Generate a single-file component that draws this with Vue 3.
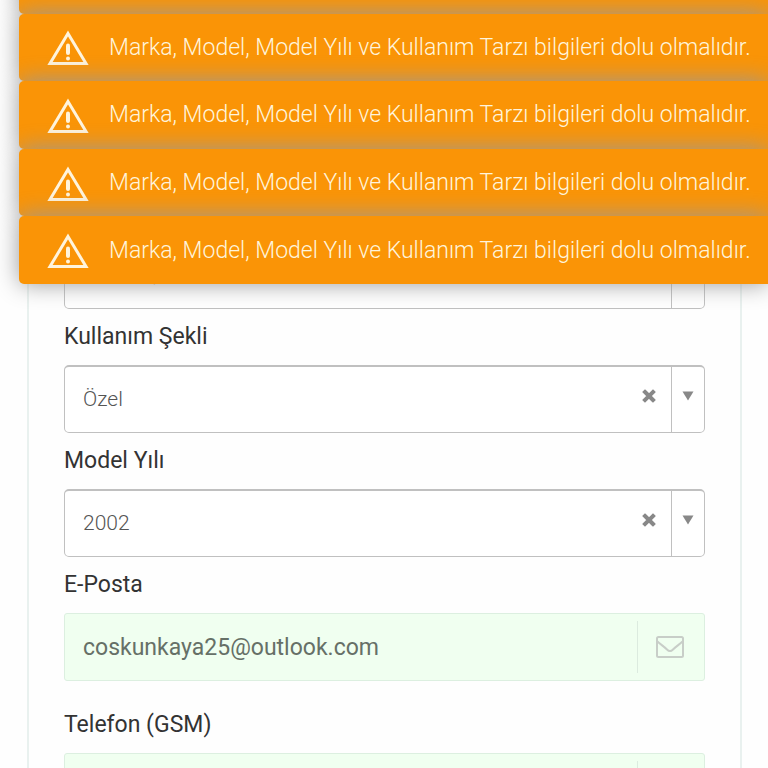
<template>
  <div class="page">
    <form class="panel" @submit.prevent>
      <div v-for="field in selects" :key="field.id" class="form-group">
        <label :for="field.id">{{ field.label }}</label>
        <div class="select-box">
          <select :id="field.id" v-model="field.value">
            <option v-for="option in field.options" :key="option" :value="option">{{ option }}</option>
          </select>
          <button type="button" class="clear" :aria-label="field.label + ' temizle'" @click="field.value = ''">
            <svg viewBox="0 0 14 14" width="14" height="14">
              <path d="M3 3L11 11M11 3L3 11" stroke="currentColor" stroke-width="4" stroke-linecap="square" />
            </svg>
          </button>
          <span class="arrow">
            <svg viewBox="0 0 12 10" width="12" height="10">
              <path d="M0.5 0.5H11.5L6 9.5Z" fill="currentColor" />
            </svg>
          </span>
        </div>
      </div>

      <div class="form-group spaced">
        <label for="email">E-Posta</label>
        <div class="input-box">
          <input id="email" v-model="email" type="email" />
          <span class="addon">
            <svg viewBox="0 0 28 22" width="28" height="22" fill="none" stroke="currentColor" stroke-width="2">
              <rect x="1" y="1" width="26" height="20" rx="1.5" />
              <path d="M1.5 5.5C4 8 8 10.5 11 13.5Q14 16.5 17 13.5C20 10.5 24 8 26.5 5.5" />
            </svg>
          </span>
        </div>
      </div>

      <div class="form-group spaced">
        <label for="phone">Telefon (GSM)</label>
        <div class="input-box">
          <input id="phone" v-model="phone" type="tel" />
          <span class="addon"></span>
        </div>
      </div>
    </form>

    <div class="toasts">
      <div v-for="n in 5" :key="n" class="toast" role="alert">
        <svg class="warning" viewBox="0 0 42 36" width="42" height="36" fill="none" stroke="currentColor">
          <path d="M21 3.5L39 33.5H3Z" stroke-width="3" />
          <path d="M21 15.5V23" stroke-width="4" stroke-linecap="round" />
          <path d="M21 28.5V28.6" stroke-width="4" stroke-linecap="round" />
        </svg>
        <span>{{ message }}</span>
      </div>
    </div>
  </div>
</template>

<script setup>
import { ref } from 'vue'

const message = 'Marka, Model, Model Yılı ve Kullanım Tarzı bilgileri dolu olmalıdır.'

const selects = ref([
  { id: 'brand', label: 'Marka', value: 'Renault, Clio', options: ['Renault, Clio'] },
  { id: 'usage', label: 'Kullanım Şekli', value: 'Özel', options: ['Özel', 'Ticari'] },
  { id: 'year', label: 'Model Yılı', value: '2002', options: ['2001', '2002', '2003'] }
])
const email = ref('coskunkaya25@outlook.com')
const phone = ref('')
</script>

<style>
body {
  margin: 0;
  background: #fefefe;
}
</style>

<style scoped>
.page {
  position: relative;
  height: 100vh;
  overflow: hidden;
  font-family: Roboto, sans-serif;
}

.panel {
  margin: 185px 26px 0 27px;
  padding: 0 35px;
  border: solid #e9f1ef;
  border-width: 0 2px;
}

label {
  display: block;
  height: 56px;
  line-height: 56px;
  font-size: 23px;
  color: #333;
}

.select-box,
.input-box {
  display: flex;
  box-sizing: border-box;
  height: 68px;
}

.select-box {
  border: 1px solid #c0c0c0;
  border-top: 2px solid #c0c0c0;
  border-radius: 5px;
  background: #fff;
}

select,
input {
  flex: 1;
  min-width: 0;
  height: 64px;
  margin: 0;
  padding: 0 18px;
  border: 0;
  outline: 0;
  background: none;
  font-family: inherit;
}

select {
  appearance: none;
  font-size: 21px;
  font-weight: 300;
  color: #555;
}

input {
  font-size: 23px;
  color: #667067;
}

.clear {
  width: 44px;
  padding: 0 0 4px;
  border: 0;
  background: none;
  color: #888;
}

.arrow {
  display: flex;
  align-items: center;
  justify-content: center;
  width: 33px;
  padding-bottom: 8px;
  box-sizing: border-box;
  border-left: 1px solid #c0c0c0;
  color: #888;
}

.spaced {
  margin-bottom: 16px;
}

.input-box {
  align-items: center;
  border: 1px solid #dcefe0;
  border-radius: 3px;
  background: #f0fff0;
}

.addon {
  display: flex;
  align-items: center;
  justify-content: center;
  box-sizing: border-box;
  width: 67px;
  height: 52px;
  padding-right: 2px;
  border-left: 1px solid #dcebdf;
  color: #c8cec8;
}

.toasts {
  position: absolute;
  top: -54px;
  left: 19px;
  right: 0;
  display: grid;
  grid-template-rows: repeat(5, 1fr);
  height: 338px;
}

.toast {
  display: flex;
  align-items: center;
  gap: 20px;
  padding-left: 28px;
  border-radius: 5px 0 0 5px;
  background: #fa9406;
  box-shadow: 0 0 23px #999;
  color: #fff4dc;
  font-size: 23px;
  font-weight: 300;
  white-space: nowrap;
}

.warning {
  flex: none;
  margin-top: 2px;
}
</style>
